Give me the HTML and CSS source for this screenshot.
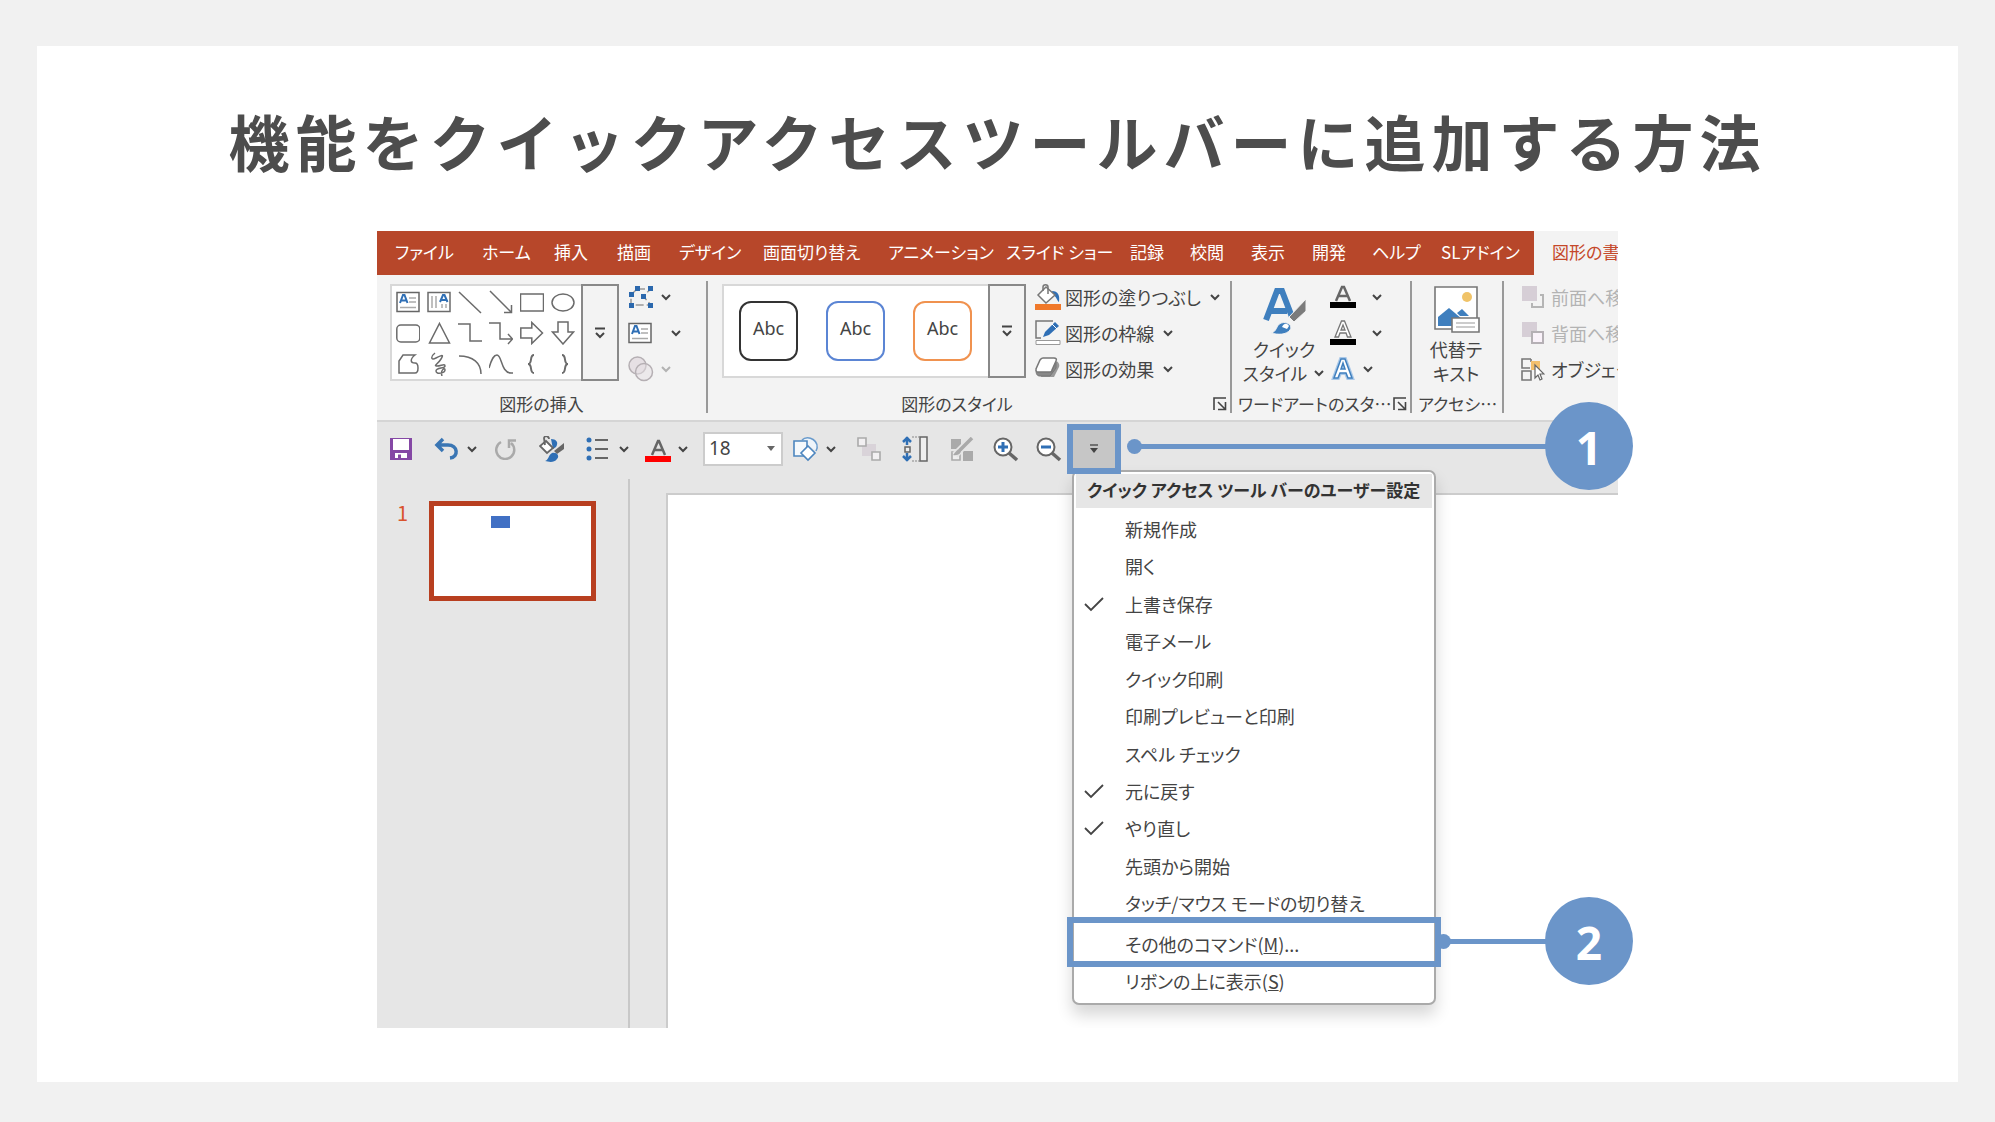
FILE: index.html
```html
<!DOCTYPE html>
<html lang="ja">
<head>
<meta charset="utf-8">
<meta name="viewport" content="width=device-width, initial-scale=1">
<title>機能をクイックアクセスツールバーに追加する方法</title>
<link rel="stylesheet" href="styles.css">
</head>
<body>
<svg class="defs" aria-hidden="true">
  <symbol id="chev" viewBox="0 0 12 12"><path d="M2 4l4 4 4-4" fill="none" stroke="currentColor" stroke-width="2"/></symbol>
  <symbol id="more" viewBox="0 0 14 14"><path d="M2 2.500h10M3 7l4 4 4-4" fill="none" stroke="currentColor" stroke-width="2"/></symbol>
  <symbol id="launch" viewBox="0 0 14 14"><path d="M1 13V1h12M5 5l7 7M12.500 5v7.500H5" fill="none" stroke="currentColor" stroke-width="1.600"/></symbol>
  <symbol id="textbox" viewBox="0 0 24 24"><path d="M1 2.500h22v19H1z" fill="#fff" stroke="#666" stroke-width="1.500"/><path d="M4 13l3-8h1.500l3 8M5 10.500h5" fill="none" stroke="#2f6fb5" stroke-width="2"/><path d="M13 8h7M13 12h7M4 17.500h16" stroke="#aaa" stroke-width="1.500"/></symbol>
  <symbol id="check" viewBox="0 0 20 16"><path d="M1 8l6 6L19 2" fill="none" stroke="currentColor" stroke-width="1.800"/></symbol>
</svg>

<main class="card">
  <h1 class="title">機能をクイックアクセスツールバーに追加する方法</h1>

  <figure class="demo">
    <div class="app">
      <nav class="tabs" aria-label="リボン">
        <button class="tab">ファイル</button>
        <button class="tab">ホーム</button>
        <button class="tab">挿入</button>
        <button class="tab">描画</button>
        <button class="tab">デザイン</button>
        <button class="tab">画面切り替え</button>
        <button class="tab">アニメーション</button>
        <button class="tab">スライド ショー</button>
        <button class="tab">記録</button>
        <button class="tab">校閲</button>
        <button class="tab">表示</button>
        <button class="tab">開発</button>
        <button class="tab">ヘルプ</button>
        <button class="tab">SLアドイン</button>
        <button class="tab tab-active">図形の書式</button>
      </nav>

      <div class="ribbon">
        <section class="group group-insert">
          <div class="group-body">
            <div class="gallery">
              <div class="shapes">
                <button class="shape" aria-label="テキスト ボックス"><svg viewBox="0 0 24 24"><use href="#textbox"/></svg></button>
                <button class="shape" aria-label="縦書き"><svg viewBox="0 0 24 24"><path d="M1 2.500h22v19H1z"/><path d="M5 6v12M9 6v12M15 14v4M19 14v4" stroke="#aaa"/><path d="M13 12l3-7h1.500l3 7M14 10h5.500" stroke="#2f6fb5" stroke-width="2"/></svg></button>
                <button class="shape" aria-label="線"><svg viewBox="0 0 24 24"><path d="M1 2l22 21"/></svg></button>
                <button class="shape" aria-label="矢印"><svg viewBox="0 0 24 24"><path d="M1 1l21 21M22.500 15v7.500H15"/></svg></button>
                <button class="shape" aria-label="四角形"><svg viewBox="0 0 24 24"><path d="M.5 4h23v17H.5z"/></svg></button>
                <button class="shape" aria-label="楕円"><svg viewBox="0 0 24 24"><ellipse cx="12" cy="12.500" rx="11" ry="8.500"/></svg></button>
                <button class="shape" aria-label="角丸四角形"><svg viewBox="0 0 24 24"><rect x=".8" y="4" width="23" height="17" rx="4"/></svg></button>
                <button class="shape" aria-label="三角形"><svg viewBox="0 0 24 24"><path d="M12.500 2.500L22.500 22h-20z"/></svg></button>
                <button class="shape" aria-label="カギ線"><svg viewBox="0 0 24 24"><path d="M0 3h12v17h12"/></svg></button>
                <button class="shape" aria-label="カギ線矢印"><svg viewBox="0 0 24 24"><path d="M0 2h11v16h12M19 13l4.500 5-4.500 5"/></svg></button>
                <button class="shape" aria-label="右矢印"><svg viewBox="0 0 24 24"><path d="M.8 7h11V1.500L22.500 12 11.800 22.500V17H.8z"/></svg></button>
                <button class="shape" aria-label="下矢印"><svg viewBox="0 0 24 24"><path d="M7 1h10v10h5.500L12 23 1.500 11H7z"/></svg></button>
                <button class="shape" aria-label="フリーフォーム"><svg viewBox="0 0 24 24"><path d="M7 3h12c-5 4-5 8 0 8 4 0 4 10 0 10H3V9z"/></svg></button>
                <button class="shape" aria-label="フリーハンド"><svg viewBox="0 0 24 24"><path d="M8 1c-4 3-5 8 1 5s8-4 5 1-8 7-4 7 8-3 8 0-9 1-9 5 9 2 9-1-5 0-3 6"/></svg></button>
                <button class="shape" aria-label="円弧"><svg viewBox="0 0 24 24"><path d="M1 4c14 0 22 7 22 18"/></svg></button>
                <button class="shape" aria-label="曲線"><svg viewBox="0 0 24 24"><path d="M0 16C3 6 5 3 8 3c5 0 4 18 14 18h2"/></svg></button>
                <button class="shape" aria-label="左中かっこ"><svg viewBox="0 0 24 24"><path d="M14 3c-5 0-1 9-6 9 5 0 1 9 6 9" stroke-width="2"/></svg></button>
                <button class="shape" aria-label="右中かっこ"><svg viewBox="0 0 24 24"><path d="M11 3c5 0 1 9 6 9-5 0-1 9-6 9" stroke-width="2"/></svg></button>
              </div>
              <button class="gallery-more" aria-label="その他の図形"><svg class="i14"><use href="#more"/></svg></button>
            </div>
            <div class="side">
              <button class="cmd" aria-label="図形の編集"><svg class="i26" viewBox="0 0 26 24"><path d="M9 4h14L15 11l8 9H3V10z" fill="none" stroke="#999" stroke-dasharray="8 3" stroke-width="1.500"/><path d="M7 1h5v5H7zM20 1h5v5h-5zM1 7h5v5H1zM13 9h5v5h-5zM1 18h5v5H1zM20 18h5v5h-5z" fill="#2b68ad"/></svg><svg class="i12"><use href="#chev"/></svg></button>
              <button class="cmd cmd-wide" aria-label="テキスト ボックス"><svg class="i24"><use href="#textbox"/></svg><svg class="i12"><use href="#chev"/></svg></button>
              <button class="cmd cmd-off" aria-label="図形の結合"><svg class="i26" viewBox="0 0 26 26"><circle cx="9.500" cy="9.500" r="8.500" fill="#e6e0e4" stroke="#b5afb3" stroke-width="1.500"/><circle cx="16" cy="16" r="8.500" fill="#e6e0e4" fill-opacity=".5" stroke="#b5afb3" stroke-width="1.500"/></svg><svg class="i12"><use href="#chev"/></svg></button>
            </div>
          </div>
          <div class="group-label"><span>図形の挿入</span></div>
        </section>

        <section class="group group-style">
          <div class="group-body">
            <div class="gallery">
              <div class="swatches">
                <button class="swatch">Abc</button>
                <button class="swatch swatch-blue">Abc</button>
                <button class="swatch swatch-orange">Abc</button>
              </div>
              <button class="gallery-more" aria-label="その他のスタイル"><svg class="i14"><use href="#more"/></svg></button>
            </div>
            <div class="side">
              <button class="cmd"><svg class="i26" viewBox="0 0 26 26"><path d="M17 7c6 0 8 4 7 11-2-1-2-5-6-7z" fill="#2f6fb5"/><path d="M11 3L3 11l8 8 9-8z" fill="#fff" stroke="#777" stroke-width="1.500"/><path d="M8 7V3c0-3 5-3 5 0v7" fill="none" stroke="#777" stroke-width="1.500"/><path d="M0 20h26v6H0z" fill="#f0792b"/></svg><span>図形の塗りつぶし</span><svg class="i12"><use href="#chev"/></svg></button>
              <button class="cmd"><svg class="i26" viewBox="0 0 26 26"><path d="M18 1H1v17h5" fill="none" stroke="#777" stroke-width="1.500"/><path d="M8 17l2-5L20 2l4 4-10 9z" fill="#2f6fb5"/><path d="M17 4l5 5" stroke="#fff"/><path d="M1 20.500h24v4H1z" fill="#fff" stroke="#999"/></svg><span>図形の枠線</span><svg class="i12"><use href="#chev"/></svg></button>
              <button class="cmd"><svg class="i26" viewBox="0 0 26 26"><path d="M8 5h12c3 0 5 3 4 6l-5 10H6z" fill="#999"/><path d="M1 14c0 4 1 6 4 6h10l6-8V6" fill="#888" stroke="#777"/><path d="M8 2h11c2 0 3 1 2 3l-4 9c0 1-1 2-2 2H3c-2 0-2-1-2-3l4-9c1-1 1-2 3-2z" fill="#fff" stroke="#777" stroke-width="1.500"/></svg><span>図形の効果</span><svg class="i12"><use href="#chev"/></svg></button>
            </div>
          </div>
          <div class="group-label"><span>図形のスタイル</span><svg class="launcher i14"><use href="#launch"/></svg></div>
        </section>

        <section class="group group-wordart">
          <div class="group-body">
            <button class="big">
              <svg class="big-icon" viewBox="0 0 48 48"><path d="M6 34L17 5h5l10 26M11 25h16" fill="none" stroke="#3f7fbe" stroke-width="6"/><path d="M46 13v12L34 36l-5-5z" fill="#7b7b7b" stroke="#f3f3f3" stroke-width="1"/><path d="M11 47c6-1 5-8 10-10 7-2 12 3 9 7-4 5-12 5-19 3z" fill="#3f7fbe" stroke="#f3f3f3" stroke-width="1"/><path d="M22 41c2-4 5-4 7-1l-2 3z" fill="#fff"/></svg>
              <span>クイック</span>
              <span class="big-line">スタイル<svg class="i12"><use href="#chev"/></svg></span>
            </button>
            <div class="side">
              <button class="cmd cmd-wide" aria-label="文字の塗りつぶし"><svg class="i26" viewBox="0 0 26 26"><path d="M6 17L12 3h2l6 14M8 12h10" fill="none" stroke="#666" stroke-width="2.500"/><path d="M0 18h26v6H0z" fill="#000"/></svg><svg class="i12"><use href="#chev"/></svg></button>
              <button class="cmd cmd-wide" aria-label="文字の輪郭"><svg class="i26" viewBox="0 0 26 26"><path d="M5 17L11.500 1h3L21 17h-3.500L16 13h-6l-1.500 4zM11 10h4l-2-5z" fill="#fff" stroke="#777" stroke-width="1.300"/><path d="M0 19h26v6H0z" fill="#000"/></svg><svg class="i12"><use href="#chev"/></svg></button>
              <button class="cmd" aria-label="文字の効果"><svg class="i26" viewBox="0 0 26 26"><path d="M4 22L11 3h4l7 19h-4l-2-5h-6l-2 5zM11 13h4l-2-6z" fill="#fff" stroke="#a9c8e8" stroke-width="4"/><path d="M4 22L11 3h4l7 19h-4l-2-5h-6l-2 5zM11 13h4l-2-6z" fill="#fff" stroke="#3f7fbe" stroke-width="1.500"/></svg><svg class="i12"><use href="#chev"/></svg></button>
            </div>
          </div>
          <div class="group-label group-label-start"><span>ワードアートのスタ…</span><svg class="launcher i14"><use href="#launch"/></svg></div>
        </section>

        <section class="group group-access">
          <div class="group-body">
            <button class="big">
              <svg class="big-icon" viewBox="0 0 48 48"><path d="M3 1h42v42H3z" fill="#fff" stroke="#777" stroke-width="1.600"/><circle cx="35" cy="11" r="5" fill="#f0c368"/><path d="M6 40V31L17 22l13 11-4 7z" fill="#3f7fbe"/><path d="M25 27l5-4 7 7H28z" fill="#3f7fbe"/><path d="M20 32h27v14H20z" fill="#fff" stroke="#777" stroke-width="1.600"/><path d="M24 37h19M24 41h19" stroke="#999" stroke-width="1.200"/></svg>
              <span>代替テ</span>
              <span>キスト</span>
            </button>
          </div>
          <div class="group-label group-label-start"><span>アクセシ…</span></div>
        </section>

        <section class="group group-arrange">
          <div class="group-body">
            <div class="side">
              <button class="cmd cmd-off"><svg class="i24" viewBox="0 0 24 24"><path d="M1 1h15v15H1z" fill="#d6ced6"/><path d="M19 10h3v12H11v-4" fill="none" stroke="#b5b5b5" stroke-width="2"/></svg><span>前面へ移動</span></button>
              <button class="cmd cmd-off"><svg class="i24" viewBox="0 0 24 24"><path d="M1 1h15v15H1z" fill="#d6ced6"/><path d="M11 11h11v11H11z" fill="#faf2fa" stroke="#b5b0b5" stroke-width="2"/></svg><span>背面へ移動</span></button>
              <button class="cmd"><svg class="i24" viewBox="0 0 24 24"><path d="M10 2H1v9h8M1 14h9v9H1zM10 2v3" fill="none" stroke="#777" stroke-width="1.600"/><path d="M10 4h9v9h-9z" fill="#f3c06d"/><path d="M14 8v13l3-3 2 5 2-1-2-5h4z" fill="#fff" stroke="#666" stroke-width="1.200"/></svg><span>オブジェクト</span></button>
            </div>
          </div>
        </section>
      </div>

      <div class="toolbar">
        <button class="tool" aria-label="上書き保存"><svg class="i22" viewBox="0 0 22 22"><path d="M0 0h22v22H0z" fill="#8548a5"/><path d="M3 1h16v11H3zM5 15h12v5H5z" fill="#fff"/><path d="M8 16.500h3V20H8z" fill="#8548a5"/></svg></button>
        <button class="tool" aria-label="元に戻す"><svg class="i26" viewBox="0 0 26 26"><path d="M9 3L3 9l6 6M3 9h11c10 0 11 12 2 13" fill="none" stroke="#3a76b4" stroke-width="3.500"/></svg><svg class="i12"><use href="#chev"/></svg></button>
        <button class="tool" aria-label="やり直し"><svg class="i22" viewBox="0 0 22 22"><path d="M6 4a9 9 0 1 0 10 1M14 10V2.500h7" fill="none" stroke="#aaa" stroke-width="2.500"/></svg></button>
        <button class="tool" aria-label="塗りつぶし"><svg class="i26" viewBox="0 0 26 26"><path d="M12 3c5 0 8 3 5 8l-3 2z" fill="#2f6fb5"/><path d="M7 5l7 7-6 5-7-7z" fill="#fff" stroke="#666" stroke-width="1.800"/><path d="M6 9L5 2c1-3 5-2 5 1" fill="none" stroke="#666" stroke-width="1.800"/><path d="M25 7v6l-7 5-3-3z" fill="#666"/><path d="M6 25c4-1 3-6 7-8 5-1 8 3 5 6-3 4-8 3-12 2z" fill="#2f6fb5"/></svg></button>
        <button class="tool" aria-label="箇条書き"><svg class="i26" viewBox="0 0 26 26"><path d="M9 4h13M9 13h13M9 22h13" stroke="#666" stroke-width="1.800"/><g fill="#2f6fb5"><circle cx="3" cy="4" r="2.500"/><circle cx="3" cy="13" r="2.500"/><circle cx="3" cy="22" r="2.500"/></g></svg><svg class="i12"><use href="#chev"/></svg></button>
        <button class="tool" aria-label="フォントの色"><svg class="i26" viewBox="0 0 26 26"><path d="M7 19L13 5h1l6 14M9 14h9" fill="none" stroke="#666" stroke-width="2.500"/><path d="M0 20h26v6H0z" fill="red"/></svg><svg class="i12"><use href="#chev"/></svg></button>
        <div class="size">
          <select class="size-select" aria-label="フォント サイズ"><option>18</option></select>
          <svg class="size-caret" viewBox="0 0 8 5"><path d="M0 0h8L4 5z" fill="#666"/></svg>
        </div>
        <button class="tool" aria-label="図形"><svg class="i26" viewBox="0 0 26 26"><path d="M9 4c6-6 19 1 14 11" fill="#eef4fa" stroke="#6a9bcc" stroke-width="1.600"/><path d="M1 5h13v15H1z" fill="#f5f9fc" stroke="#4d86bf" stroke-width="1.600"/><path d="M15 10l7 7-7 7-7-7z" fill="#fff" stroke="#4d86bf" stroke-width="1.600"/></svg><svg class="i12"><use href="#chev"/></svg></button>
        <button class="tool" aria-label="グループ化"><svg class="i24" viewBox="0 0 24 24"><path d="M5 7h14v12H5z" fill="#d9d3d9"/><path d="M1 1h8v8H1zM15 15h8v8h-8z" fill="#f2f0f2" stroke="#aaa" stroke-width="1.600"/></svg></button>
        <button class="tool" aria-label="高さを揃える"><svg class="i26" viewBox="0 0 26 26"><path d="M5 1v8M1 6l4-4 4 4M5 17v8M1 20l4 4 4-4" fill="none" stroke="#2f6fb5" stroke-width="2.500"/><path d="M3 11h5v5H3zM18 1h7v24h-7z" fill="#eee" stroke="#666" stroke-width="1.500"/><path d="M10 1h8M10 25h8" stroke="#888" stroke-dasharray="2 1"/></svg></button>
        <button class="tool" aria-label="図形の変更"><svg class="i24" viewBox="0 0 24 24"><path d="M1 2h10v10H1zM13 14h10v10H13z" fill="#aaa"/><path d="M2 15h8v8H2z" fill="#eee" stroke="#aaa" stroke-width="1.600"/><path d="M22 1L9 14l-4 4" stroke="#e6e6e6" stroke-width="7"/><path d="M22 1L10 13" stroke="#aaa" stroke-width="3.500"/><path d="M11 12c-3-1-5 3-8 6 5 1 9-2 8-6z" fill="#aaa"/></svg></button>
        <button class="tool" aria-label="拡大"><svg class="i26" viewBox="0 0 26 26"><circle cx="10" cy="11" r="8.500" fill="#fff" stroke="#666" stroke-width="2"/><path d="M16 17l8 7" stroke="#666" stroke-width="3.500"/><path d="M5 11h10M10 6v10" stroke="#2f6fb5" stroke-width="3"/></svg></button>
        <button class="tool" aria-label="縮小"><svg class="i26" viewBox="0 0 26 26"><circle cx="10" cy="11" r="8.500" fill="#fff" stroke="#666" stroke-width="2"/><path d="M16 17l8 7" stroke="#666" stroke-width="3.500"/><path d="M5 11h10" stroke="#2f6fb5" stroke-width="3"/></svg></button>
        <div class="customize">
          <button class="customize-button marked" aria-label="クイック アクセス ツール バーのユーザー設定" aria-expanded="true"><svg class="i10" viewBox="0 0 10 10"><path d="M1 1h8" stroke="#555" stroke-width="1.500"/><path d="M1 4h8L5 9z" fill="#444"/></svg></button>
          <div class="menu" role="menu">
            <div class="menu-title">クイック アクセス ツール バーのユーザー設定</div>
            <button class="item" role="menuitem">新規作成</button>
            <button class="item" role="menuitem">開く</button>
            <button class="item" role="menuitemcheckbox" aria-checked="true"><svg class="check"><use href="#check"/></svg>上書き保存</button>
            <button class="item" role="menuitem">電子メール</button>
            <button class="item" role="menuitem">クイック印刷</button>
            <button class="item" role="menuitem">印刷プレビューと印刷</button>
            <button class="item" role="menuitem">スペル チェック</button>
            <button class="item" role="menuitemcheckbox" aria-checked="true"><svg class="check"><use href="#check"/></svg>元に戻す</button>
            <button class="item" role="menuitemcheckbox" aria-checked="true"><svg class="check"><use href="#check"/></svg>やり直し</button>
            <button class="item" role="menuitem">先頭から開始</button>
            <button class="item" role="menuitem">タッチ/マウス モードの切り替え</button>
            <button class="item item-more marked" role="menuitem">その他のコマンド(<u>M</u>)...</button>
            <button class="item" role="menuitem">リボンの上に表示(<u>S</u>)</button>
          </div>
        </div>
      </div>

      <div class="workspace">
        <aside class="thumbs">
          <span class="thumb-number">1</span>
          <button class="thumb" aria-label="スライド 1"><span class="thumb-shape"></span></button>
        </aside>
        <div class="slide"></div>
      </div>
    </div>

    <div class="callout callout-first"><span class="dot"></span><span class="lead"></span><span class="badge">1</span></div>
    <div class="callout callout-second"><span class="dot"></span><span class="lead"></span><span class="badge">2</span></div>
  </figure>
</main>
</body>
</html>
```

FILE: styles.css
```css
:root {
  --accent: #6b95c9;
  --brand: #b7472a;
  --ink: #444;
}

*, ::after { box-sizing: border-box; }

body {
  margin: 0;
  padding: 46px 37px 39px;
  background: #f1f1f1;
  color: var(--ink);
  font-family: "Noto Sans CJK JP", sans-serif;
  font-size: 18px;
  line-height: 24px;
}

button {
  margin: 0;
  padding: 0;
  border: 0;
  background: none;
  color: inherit;
  font: inherit;
  font-feature-settings: inherit;
  white-space: nowrap;
}

svg { display: block; flex: none; }
.defs { position: absolute; width: 0; height: 0; }
.i10 { width: 10px; height: 10px; }
.i12 { width: 12px; height: 12px; }
.i14 { width: 14px; height: 14px; }
.i22 { width: 22px; height: 22px; }
.i24 { width: 24px; height: 24px; }
.i26 { width: 26px; height: 26px; }

.card {
  padding: 51px 32px 54px;
  background: #fff;
}

.title {
  margin: 0 0 46px;
  color: #4d4d4d;
  font-size: 61px;
  font-weight: 700;
  line-height: 88px;
  letter-spacing: 6px;
  text-align: center;
}

.demo {
  position: relative;
  max-width: 1241px;
  margin: 0 auto;
  font-feature-settings: "palt";
}

.app {
  overflow: hidden;
  background: #e6e6e6;
}

/* Ribbon tabs */
.tabs {
  display: grid;
  grid-template-columns: 87px 72px 63px 62px 84px 125px 118px 124px 60px 61px 61px 60px 69px 102px 1fr;
  height: 44px;
  padding-left: 9px;
  background: linear-gradient(90deg, var(--brand) 1157px, #f3f3f3 1157px);
}

.tab {
  padding: 0 0 3px 9px;
  color: #fff;
  font-size: 17px;
  text-align: left;
}

.tab-active { padding-left: 18px; color: #c5482a; }

/* Ribbon groups */
.ribbon {
  display: grid;
  grid-template-columns: 331px 524px 180px 92px 1fr;
  height: 147px;
  padding-top: 6px;
  border-bottom: 2px solid #d5d5d5;
  background: #f3f3f3;
}

.group {
  display: flex;
  flex-direction: column;
  height: 132px;
  min-width: 0;
  border-right: 2px solid #999;
}

.group-body { display: flex; height: 116px; padding-top: 3px; }
.group-insert .group-body { padding-left: 13px; }
.group-style .group-body { padding-left: 14px; }
.group-arrange { border-right: 0; }
.group-arrange .group-body { padding-left: 8px; }

.group-label {
  display: flex;
  align-items: center;
  justify-content: center;
  position: relative;
  height: 18px;
  font-size: 17px;
  white-space: nowrap;
}

.group-label-start { justify-content: flex-start; padding-left: 6px; }
.group-style .group-label { padding-right: 24px; }
.launcher { position: absolute; right: 3px; }

.gallery { display: flex; height: 97px; border: 2px solid #d8d8d8; border-right: 0; background: #fff; }
.group-style .gallery { height: 94px; }
.gallery-more {
  display: grid;
  place-items: center;
  width: 38px;
  margin: -2px 0;
  border: 2px solid #888;
  background: #f3f3f3;
}

.shapes {
  display: grid;
  grid-template-columns: repeat(6, 31px);
  grid-template-rows: repeat(3, 31px);
  width: 189px;
}
.shape { display: grid; place-items: center; }
.shape svg { width: 24px; height: 24px; fill: none; stroke: #6b6b6b; stroke-width: 1.5; }

.swatches { display: flex; align-items: center; gap: 28px; width: 264px; padding-left: 15px; }
.swatch {
  width: 59px;
  height: 60px;
  padding-bottom: 6px;
  border: 2px solid #333;
  border-radius: 12px;
  background: #fff;
  font-family: "Noto Sans", sans-serif;
  font-size: 18px;
}
.swatch-blue { border-color: #5b85d4; }
.swatch-orange { border-color: #f0924f; }

.side { display: flex; flex-direction: column; margin-top: -5px; padding-left: 9px; }
.cmd { display: flex; align-items: center; gap: 6px; height: 36px; }
.group-style .cmd span { margin: 0 2px 0 -2px; }
.group-insert .cmd-wide { gap: 18px; }
.group-wordart .cmd-wide { gap: 15px; }
.cmd-off { color: #b3b3b3; }

.big { display: flex; flex-direction: column; align-items: center; width: 88px; padding-top: 2px; line-height: 24px; }
.big-icon { width: 48px; height: 48px; margin-bottom: 3px; }
.big-line { display: flex; align-items: center; gap: 6px; }
.group-wordart .big { margin-left: 8px; }
.group-wordart .side { padding-left: 2px; }

/* Quick access toolbar */
.toolbar {
  display: grid;
  grid-template-columns: 44px 61px 44px 47px 59px 58px 90px 64px 45px 48px 43px 43px 37px 42px;
  align-items: center;
  height: 54px;
  padding-left: 13px;
}

.tool { display: flex; align-items: center; gap: 6px; }

.size { position: relative; width: 80px; height: 34px; }
.size-select {
  width: 100%;
  height: 100%;
  padding: 0 4px 2px;
  border: 2px solid #ccc;
  border-radius: 0;
  appearance: none;
  background: #fff;
  color: inherit;
  font: 19px/24px "Noto Sans", sans-serif;
}
.size-caret { position: absolute; top: 14px; right: 8px; width: 8px; height: 5px; }

.customize { position: relative; height: 38px; }
.customize-button { display: grid; place-items: center; width: 100%; height: 100%; background: #c6c6c6; }

.marked { position: relative; z-index: 2; }
.marked::after {
  content: "";
  position: absolute;
  inset: -6px;
  border: 6px solid var(--accent);
}

/* Drop-down menu */
.menu {
  position: absolute;
  top: 40px;
  left: -1px;
  z-index: 1;
  display: flex;
  flex-direction: column;
  width: 364px;
  height: 535px;
  padding: 2px;
  border: 2px solid #aaa;
  border-radius: 7px;
  background: #fff;
  box-shadow: 0 10px 16px rgba(0, 0, 0, .16);
}

.menu-title {
  height: 34px;
  margin-bottom: 3px;
  padding-left: 11px;
  background: #e6e6e6;
  color: #333;
  font-size: 17px;
  font-weight: 700;
  line-height: 32px;
  white-space: nowrap;
}

.item { position: relative; display: flex; flex: 1; align-items: center; padding: 0 0 2px 49px; white-space: pre; }
.check { position: absolute; left: 8px; width: 20px; height: 16px; }
.item-more { margin-top: 3px; }
.item-more::after { inset: -9px -9px auto; height: 50px; }

/* Slide area */
.workspace { display: grid; grid-template-columns: 253px 1fr; min-height: 552px; }
.thumbs {
  display: flex;
  align-items: flex-start;
  gap: 20px;
  margin-top: 3px;
  padding: 22px 0 0 20px;
  border-right: 2px solid #c8c8c8;
}
.thumb-number { width: 12px; color: #d9532c; font-size: 20px; }
.thumb {
  display: flex;
  align-items: flex-start;
  width: 167px;
  height: 100px;
  padding: 10px 0 0 57px;
  border: 5px solid #b83f20;
  background: #fff;
}
.thumb-shape { width: 19px; height: 12px; background: #4170c4; }
.slide { margin: 17px 0 0 36px; border: 2px solid #ccc; border-width: 2px 0 0 2px; background: #fff; }

/* Numbered callouts */
.callout { position: absolute; right: -15px; z-index: 3; display: flex; align-items: center; }
.callout-first { top: 171px; left: 750px; }
.callout-second { top: 666px; left: 1059px; }
.dot { width: 15px; height: 15px; border-radius: 50%; background: var(--accent); }
.lead { flex: 1; height: 5px; margin: 0 -2px; background: var(--accent); }
.badge {
  width: 88px;
  height: 88px;
  padding-top: 3px;
  border-radius: 50%;
  background: var(--accent);
  color: #fff;
  font: 700 46px/84px "Noto Sans", sans-serif;
  text-align: center;
}
```
